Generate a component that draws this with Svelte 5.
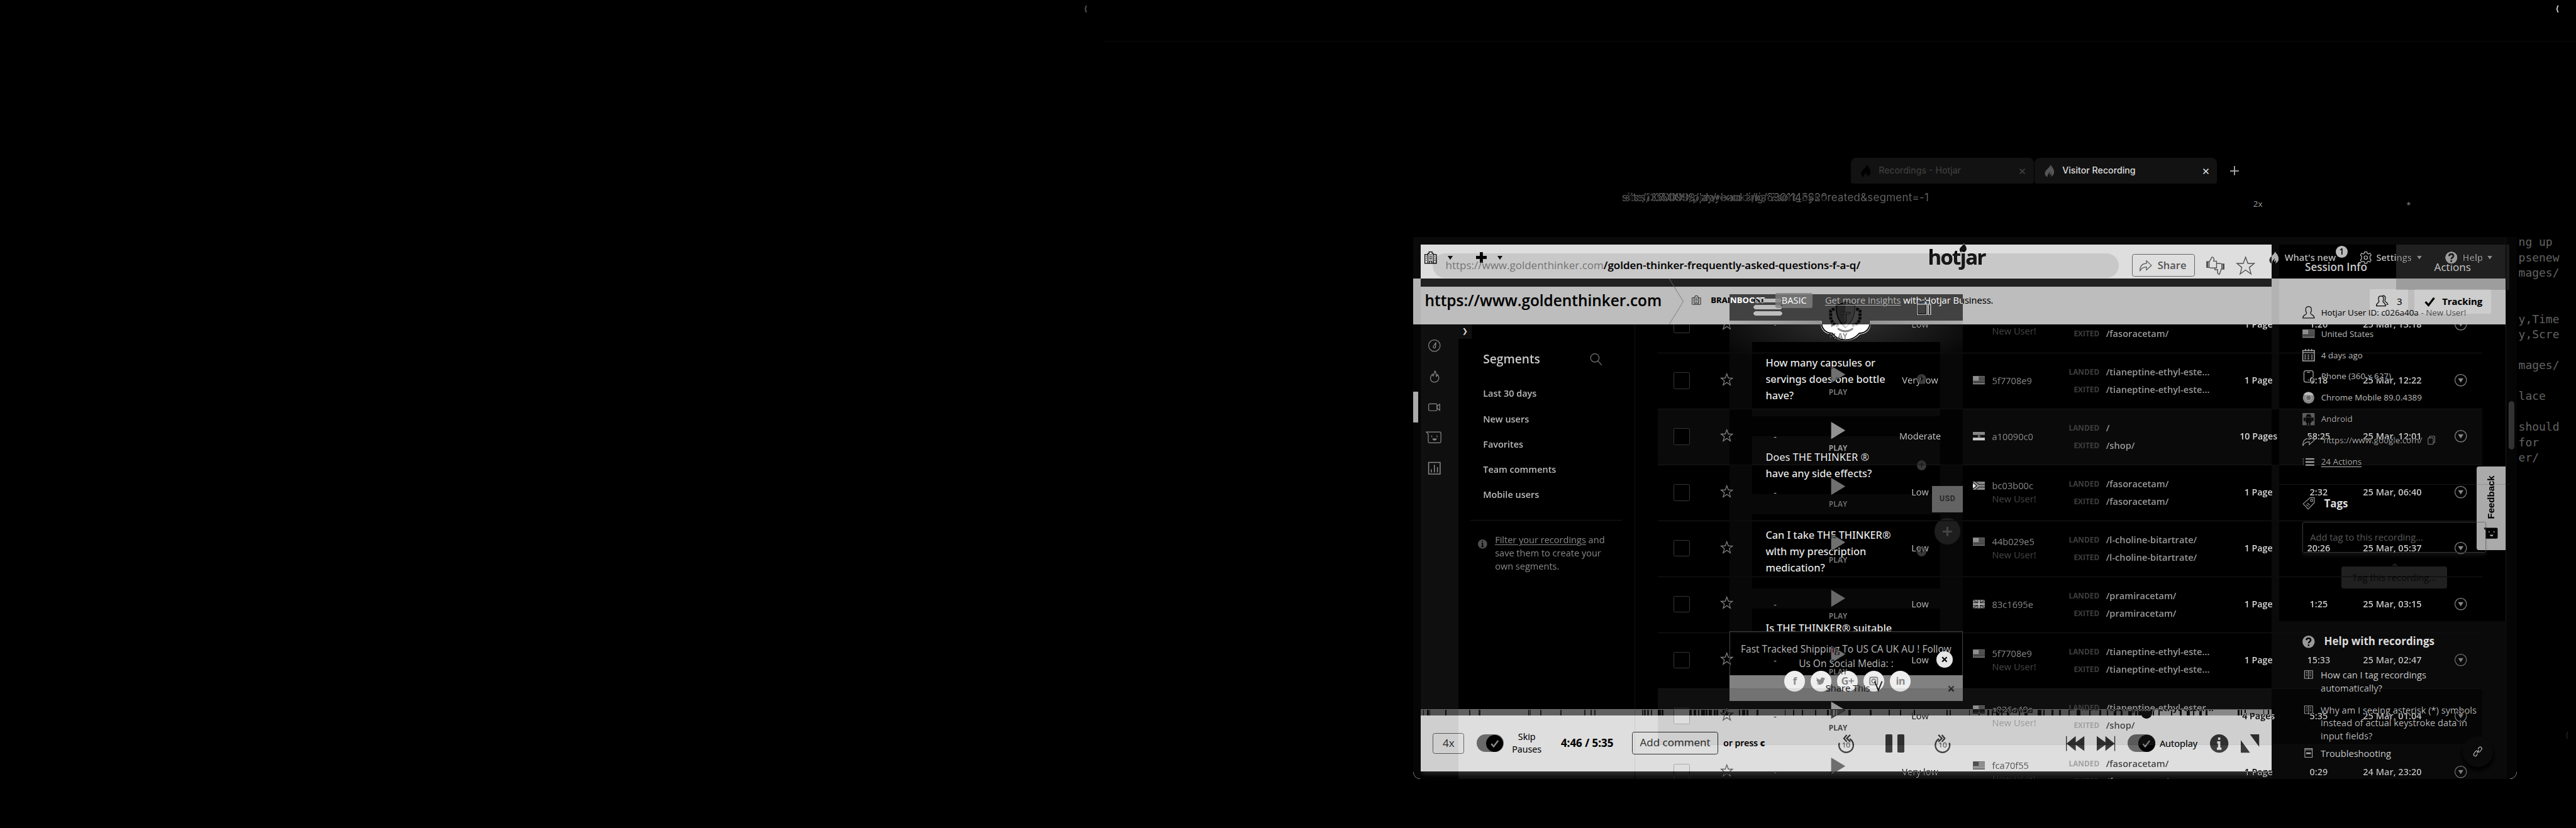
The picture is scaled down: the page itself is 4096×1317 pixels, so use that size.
<script>
  const rows = [
    { level: 'Low', flag: 'us', id: '\u00a0', fresh: true, from: '/fasoracetam/', to: '/fasoracetam/', pages: '1 Page', time: '1:26', date: '25 Mar, 13:18' },
    { level: 'Very low', flag: 'us', id: '5f7708e9', from: '/tianeptine-ethyl-este...', to: '/tianeptine-ethyl-este...', pages: '1 Page', time: '0:18', date: '25 Mar, 12:22' },
    { level: 'Moderate', flag: 'eg', id: 'a10090c0', from: '/', to: '/shop/', pages: '10 Pages', time: '58:25', date: '25 Mar, 12:01', tone: 'seen' },
    { level: 'Low', flag: 'za', id: 'bc03b00c', fresh: true, from: '/fasoracetam/', to: '/fasoracetam/', pages: '1 Page', time: '2:32', date: '25 Mar, 06:40' },
    { level: 'Low', flag: 'us', id: '44b029e5', fresh: true, from: '/l-choline-bitartrate/', to: '/l-choline-bitartrate/', pages: '1 Page', time: '20:26', date: '25 Mar, 05:37' },
    { level: 'Low', flag: 'uk', id: '83c1695e', from: '/pramiracetam/', to: '/pramiracetam/', pages: '1 Page', time: '1:25', date: '25 Mar, 03:15' },
    { level: 'Low', flag: 'us', id: '5f7708e9', fresh: true, from: '/tianeptine-ethyl-este...', to: '/tianeptine-ethyl-este...', pages: '1 Page', time: '15:33', date: '25 Mar, 02:47' },
    { level: 'Low', flag: 'us', id: 'c026a40a', fresh: true, from: '/tianeptine-ethyl-ester...', to: '/shop/', pages: '4 Pages', time: '5:35', date: '25 Mar, 01:04', tone: 'current' },
    { level: 'Very low', flag: 'us', id: 'fca70f55', fresh: true, from: '/fasoracetam/', to: '/fasoracetam/', pages: '1 Page', time: '0:29', date: '24 Mar, 23:20' },
  ];
  const segments = ['Last 30 days', 'New users', 'Favorites', 'Team comments', 'Mobile users'];
  const rail = ['gauge', 'flame', 'video', 'smile', 'chart'];
  const faqs = [
    { size: 'three', lines: ['How many capsules or', 'servings does one bottle', 'have?'] },
    { size: 'two', lines: ['Does THE THINKER ®', 'have any side effects?'] },
    { size: 'three', lines: ['Can I take THE THINKER®', 'with my prescription', 'medication?'] },
    { size: 'three last', lines: ['Is THE THINKER® suitable'] },
  ];
  const info = [
    { icon: 'person', text: 'Hotjar User ID: c026a40a', note: '- New User!' },
    { icon: 'us', text: 'United States' },
    { icon: 'calendar', text: '4 days ago' },
    { icon: 'phone', text: 'Phone (360 x 627)' },
    { icon: 'chrome', text: 'Chrome Mobile 89.0.4389' },
    { icon: 'android', text: 'Android' },
    { icon: 'share', text: 'https://www.google.com/', copy: true },
    { icon: 'list', text: '24 Actions', link: true },
  ];
  const help = [
    { icon: 'book', lines: ['How can I tag recordings', 'automatically?'] },
    { icon: 'book', lines: ['Why am I seeing asterisk (*) symbols', 'instead of actual keystroke data in', 'input fields?'] },
    { icon: 'doc', lines: ['Troubleshooting'] },
  ];
  const code = ['ng up', 'psenew', 'mages/', '', '', 'y,Time', 'y,Scre', '', 'mages/', '', 'lace', '', 'should', 'for', 'er/'];
  const social = ['f', 'tw', 'G+', 'ig', 'in'];
  // Event marks on the timeline: [offset, width]
  const ticks = [[6,3],[17,5],[23,2],[64,4],[126,4],[151,5],[281,3],[286,2],[312,3],[364,3],[426,4],[443,3],[453,4],[578,3],[583,4],[590,6],[600,4],[619,8],[629,4],[700,7],[712,6],[724,3],[732,9],[744,4],[752,8],[765,4],[772,5],[788,4],[795,7],[830,4],[838,8],[850,5],[876,6],[950,2],[972,2],[994,3],[1029,3],[1060,5],[1076,4],[1084,3],[1116,6],[1172,5],[1220,4],[1250,3],[1287,2],[1372,3],[1380,3],[1430,3],[1455,4],[1478,6],[1490,3],[1502,8],[1515,3],[1530,6],[1560,4],[1575,8],[1610,9],[1624,3],[1645,5],[1665,6],[1690,4],[1712,10],[1744,4],[1770,6],[1790,3],[1808,7],[1826,5],[1846,9],[1864,5],[1872,6],[1910,3],[1925,3],[1958,3],[1980,5],[1998,4],[2001,6],[2015,3],[2032,6],[2048,4],[2131,6],[2140,3],[2149,3],[2198,3],[2210,3]];
</script>

{#snippet icon(name, cls = '')}
  <svg class="ico {cls}" viewBox="0 0 32 32" fill="none" stroke="currentColor" stroke-width="2">
    {#if name === 'building'}
      <path d="M9 31V5h3V1h8v4h3v26M9 8H1v23h30V8h-8M13 31v-6h6v6M4 13h2M4 18h2M4 23h2M26 13h2M26 18h2M26 23h2M12 9h8M12 14h8M12 19h8" />
    {:else if name === 'gauge'}
      <circle cx="16" cy="16" r="15" /><path d="M20 8l-6 9a3 3 0 105 2z" />
    {:else if name === 'flame'}
      <path d="M17 1c1 6-3 8-4 14-2-1-2-3-2-5-8 8-7 20 5 21 13-1 14-13 8-20 0 3-1 4-3 5 0-6-1-11-4-15z" />
    {:else if name === 'hotflame'}
      <path fill="currentColor" stroke="none" d="M18 0c1 8-14 12-14 23 0 4 3 8 7 9-1-8 4-8 6-14 2 4-2 6 0 9 2-1 3-3 3-5 2 3 1 7-1 10 14-7 11-20-1-32z" />
    {:else if name === 'video'}
      <rect x="1" y="7" width="22" height="18" rx="3" /><path d="M23 13l7-5v16l-7-5z" />
    {:else if name === 'smile'}
      <path d="M-5 2h35a3 3 0 013 3v22a3 3 0 01-3 3H3a3 3 0 01-3-3V7z" /><path d="M9 11v4M23 11v4" /><path fill="currentColor" d="M12 20h9c-1 4-8 4-9 0z" />
    {:else if name === 'chart'}
      <path d="M1 1h30v30H1zM8 27v-8M16 27V7M24 27V13" stroke-width="2.5" />
    {:else if name === 'search'}
      <circle cx="13" cy="12" r="11" /><path d="M21 20l10 11" />
    {:else if name === 'star'}
      <path d="M16 1l4 11h11l-8.500 7 3 11.500L16 23.500 6.500 30.500l3-11.500L1 12h11z" />
    {:else if name === 'gear'}
      <circle cx="16" cy="16" r="4.500" /><path d="M13 1h6l1 4 3 1.500 4-2 3 5-3 3v7l3 3-3 5-4-2-3 1.500-1 4h-6l-1-4-3-1.500-4 2-3-5 3-3v-7l-3-3 3-5 4 2L12 5z" />
    {:else if name === 'question' || name === 'info'}
      <circle cx="16" cy="16" r="16" fill="currentColor" stroke="none" />
      {#if name === 'question'}
        <path class="cut" stroke-width="4" d="M10.500 12c0-7 11-7 11 0 0 4-5.500 4-5.500 8M16 23v4" />
      {:else}
        <path class="cut" stroke-width="4" d="M16 5.500v4M12.500 14H16v11M12 25h8" />
      {/if}
    {:else if name === 'down'}
      <circle cx="16" cy="16" r="15" /><path fill="currentColor" stroke="none" d="M9 11h14l-7 11z" />
    {:else if name === 'people'}
      <path d="M13 3c8 0 8 8 5 14 1 4 7 4 7 12H1c0-8 6-8 7-12C5 11 5 3 13 3zM17 2c8-1 9 7 6 13 0 4 7 4 8 10h-4" />
    {:else if name === 'check'}
      <path stroke-width="6" d="M3 17l9 10L29 5" />
    {:else if name === 'person'}
      <path d="M16 1c9 0 9 10 5 17 0 5 10 4 10 13H1c0-9 10-8 10-13C7 11 7 1 16 1z" />
    {:else if name === 'calendar'}
      <path d="M1 4h30v27H1zM1 10h30M8 0v6M16 0v6M24 0v6M5 16h5M13 16h5M22 16h5M5 21h5M13 21h5M22 21h5M5 26h5M13 26h5M22 26h5" stroke-width="2.500" />
    {:else if name === 'phone'}
      <rect x="4" y="1" width="24" height="30" rx="5" /><path d="M12 5h8M14 25h4" />
    {:else if name === 'chrome'}
      <circle cx="16" cy="16" r="15" fill="#777" stroke="none" /><path d="M3 8a15 15 0 0126 1H16z" fill="#444" stroke="none" /><circle cx="16" cy="16" r="7" fill="#999" stroke="#555" />
    {:else if name === 'android'}
      <path fill="#999" stroke="none" d="M0 0h32v32H0z" /><path stroke="none" class="blank" d="M9 10a7 7 0 0114 0zM8 11h16v13h-3v7h-4v-6h-2v6h-4v-7H8zM3 12h4v9H3zM25 12h4v9h-4z" />
    {:else if name === 'share'}
      <path d="M1 30C1 17 7 10 18 10V3l13 12-13 12v-8C9 19 4 23 1 30z" />
    {:else if name === 'list'}
      <path stroke-width="4" d="M8 8h23M8 16h23M8 24h23" /><path stroke-width="2" stroke-dasharray="2 2" d="M2 6v20" />
    {:else if name === 'tag'}
      <path d="M2 17L20 1h11v13L15 31z" /><circle cx="24" cy="8" r="3" /><path d="M10 19l6 5M13 15l6 5" />
    {:else if name === 'book'}
      <path d="M4 5h24v23H4zM16 5v25M8 10h5M8 15h5M8 20h5M19 10h5M19 15h5M19 20h5" />
    {:else if name === 'doc'}
      <path d="M5 3h22v26H5zM5 7h22" /><path d="M9 17h14" stroke-width="5" />
    {:else if name === 'copy'}
      <path d="M4 8h18v22H4zM9 8V2h18v22h-5" />
    {:else if name === 'thumbs'}
      <path d="M1 9h4v10H1zM5 10l5-9c3 0 4 3 3 7h5v12H8l-3-1M31 13h-4v9h4zM27 20l-4 11c-3 0-4-3-3-8h-5v-3M18 12h6l3 1" /><path stroke-width="3" d="M2 9v10M30 13v9" />
    {:else if name === 'bag'}
      <path d="M2 9h20v22H2zM25 9h5v22h-5zM9 9V6a6 6 0 0112 0v3" stroke-width="2.500" />
    {:else if name === 'back' || name === 'ahead'}
      <g transform={name === 'ahead' ? 'matrix(-1 0 0 1 32 0)' : ''}>
        <path stroke-width="2.500" d="M4 15a12.500 12.500 0 1018-7M17 1l-5 6 5 6M23 1l-6 6 6 6" />
      </g>
    {:else if name === 'prev' || name === 'next'}
      <g transform={name === 'next' ? 'matrix(-1 0 0 1 32 0)' : ''} fill="currentColor" stroke="none">
        <path d="M0 3h1.500v26H0zM1 16L17 3v26zM14 16L32 3v26z" />
      </g>
    {:else if name === 'expand'}
      <path fill="currentColor" stroke="none" d="M16 0h16v22zM0 10v22h16z" />
    {:else if name === 'link'}
      <path stroke-width="2.500" d="M14 20l6-9M17 9l3-5c3-5 11 0 8 5l-4 6c-2 3-5 3-7 1M16 22l-3 5c-3 5-11 1-8-5l4-6c2-3 5-3 7-1" />
    {:else if name === 'cross'}
      <path stroke-width="7" d="M4 4l24 24M28 4L4 28" />
    {/if}
  </svg>
{/snippet}

{#snippet flag(name)}
  <svg class="flag" viewBox="0 0 32 22">
    {#if name === 'us'}
      <path fill="#888" d="M0 0h32v22H0z" /><path stroke="#ddd" stroke-width="1.700" d="M14 3h17M14 6.500h17M14 10h17M1 13.500h30M1 17h30" /><path fill="#666" d="M1 1h14v11H1z" /><path stroke="#aaa" stroke-width="1" stroke-dasharray="1.500 1.500" d="M2 3.500h12M2 6.500h12M2 9.500h12" />
    {:else if name === 'eg'}
      <path fill="#777" d="M0 0h32v8H0z" /><path fill="#eee" d="M0 8h32v7H0z" /><path fill="#333" d="M0 15h32v7H0z" /><path fill="#999" d="M13 7h6v8h-6z" />
    {:else if name === 'za'}
      <path fill="#777" d="M0 0h32v22H0z" /><path stroke="#ddd" stroke-width="8" fill="none" d="M0-2l15 13h18M0 24l15-13" /><path stroke="#666" stroke-width="4" fill="none" d="M0-2l15 13h18M0 24l15-13" /><path fill="#111" d="M0 5l8 6-8 6z" />
    {:else}
      <path fill="#777" d="M0 0h32v22H0z" /><path stroke="#ccc" stroke-width="2" d="M0 0l32 22M32 0L0 22" /><path stroke="#eee" stroke-width="7" d="M16 0v22M0 11h32" /><path stroke="#444" stroke-width="4" d="M16 0v22M0 11h32" />
    {/if}
  </svg>
{/snippet}

<div class="desktop">
  <div class="topline"></div>
  <span class="mark m1">⟨</span>
  <span class="mark m2">⟨</span>
  <span class="mark m3">2x</span>
  <span class="mark m4">*</span>
  <span class="mark m5">(</span>

  <div class="tabs">
    <div class="tab">{@render icon('hotflame', 'fav')}<span>Recordings - Hotjar</span><b>×</b></div>
    <div class="tab active">{@render icon('hotflame', 'fav')}<span>Visitor Recording</span><b>×</b></div>
    <i class="newtab"></i>
  </div>
  <div class="address">
    <span>sites/1350099/playbacks/list?sort_by=created&amp;segment=-1</span>
    <span class="ghost">site/1350099/play/recording/5901145320</span>
  </div>

  <pre class="code">{#each code as line}<span>{line}</span>{/each}</pre>

  <div class="screen">
    <!-- Recordings list -->
    <section class="dash">
      <header class="top">
        {@render icon('building', 'brand')}
        <i class="caret c1"></i><i class="plus"></i><i class="caret c2"></i>
        <div class="logo">hotjar{@render icon('hotflame', 'logoflame')}</div>
        <div class="nav">
          {@render icon('hotflame')}
          <span class="whats">What's new<em>1</em></span>
          {@render icon('gear')}<span class="settings">Settings</span><i class="caret"></i>
          {@render icon('question', 'q')}<span class="helptext">Help</span><i class="caret"></i>
        </div>
      </header>
      <div class="sub">
        <div class="site">https://www.goldenthinker.com</div>
        <svg class="chev" viewBox="0 0 38 120"><path d="M0 0l37 60L0 120" fill="none" stroke="#717171" stroke-width="2" /></svg>
        {@render icon('building', 'small')}
        <b class="org">BRAINBOOST</b>
        <span class="plan">BASIC</span>
        <span class="more"><u>Get more insights</u> with Hotjar Business.</span>
        <div class="btn users">{@render icon('people')}<span>3</span></div>
        <div class="btn track">{@render icon('check', 'tick')}<b>Tracking</b></div>
      </div>
      <div class="main">
        <nav class="rail">{#each rail as r}<div>{@render icon(r)}</div>{/each}</nav>
        <i class="marker"></i>
        <aside class="segs">
          <div class="toggletab">❯</div>
          <div class="seghead"><span>Segments</span>{@render icon('search')}</div>
          <ul>{#each segments as s}<li>{s}</li>{/each}</ul>
          <div class="tip">{@render icon('info')}<p><u>Filter your recordings</u> and<br />save them to create your<br />own segments.</p></div>
        </aside>
        <div class="table">
          {#each rows as r}
            <div class="row {r.tone ?? ''}">
              <i class="box"></i>
              {@render icon('star', 'rowstar')}
              <span class="dash1">-</span>
              <div class="play"><svg viewBox="0 0 39 45"><path d="M1 0l37 22.500L1 45z" fill="currentColor" /></svg><b>PLAY</b></div>
              <span class="level">{r.level}</span>
              <div class="user">{@render flag(r.flag)}<div><span>{r.id}</span>{#if r.fresh}<span class="new">New User!</span>{/if}</div></div>
              <dl><dt>LANDED</dt><dd>{r.from}</dd><dt>EXITED</dt><dd>{r.to}</dd></dl>
              <span class="pages">{r.pages}</span>
              <span class="time">{r.time}</span>
              <span class="date">{r.date}</span>
              {@render icon('down', 'dd')}
            </div>
          {/each}
        </div>
      </div>
      <div class="feedback"><span>Feedback</span><svg viewBox="-5 0 40 32"><path fill="#fff" d="M-5 1h36a3 3 0 013 3v24a3 3 0 01-3 3H3a3 3 0 01-3-3V8z" /><path stroke="#555" stroke-width="2.500" d="M10 10v4M24 10v4" /><path fill="#555" d="M12 20h10c-1 6-9 6-10 0z" /></svg></div>
      <div class="linkbtn">{@render icon('link')}</div>
      <i class="edge"></i>
      <i class="thumb"></i>
    </section>

    <!-- Session player, inverted over the list -->
    <section class="rec">
      <div class="player">
        <div class="urlbar">
          <div class="pill"><span>https://www.goldenthinker.com</span><b>/golden-thinker-frequently-asked-questions-f-a-q/</b></div>
          <div class="sharebtn">{@render icon('share')}<span>Share</span></div>
          {@render icon('thumbs', 'big')}
          {@render icon('star', 'big bigstar')}
        </div>
        <div class="view">
          <div class="phone">
            <div class="phead">
              <div class="burger"><i></i><i></i><i></i></div>
              <svg class="crest" viewBox="0 0 134 110">
                <path d="M30 6Q0 30 2 66q2 22 28 26 12 16 36 16t38-16q26-4 28-26 2-36-28-60z" fill="#000" />
                <path d="M3 55q0 32 29 34 12 17 34 17t36-17q29-2 29-34" fill="none" stroke="#fff" stroke-width="3" />
                <path d="M66 8l24 8q2 36-24 58-26-22-24-58z" fill="#1c1c1c" stroke="#444" stroke-width="2.500" />
                <path d="M66 8l24 8q2 36-24 58z" fill="#0a0a0a" />
                <path d="M54 36h24M66 36v24" stroke="#777" stroke-width="4" />
                <path d="M38 26q-14 0-10 14-2 14 8 24 6 6 12 2M94 26q14 0 10 14 2 14-8 24-6 6-12 2" fill="none" stroke="#3a3a3a" stroke-width="8" stroke-dasharray="7 2" />
                <path d="M46 74q20 14 40 0v5q-20 14-40 0z" fill="#777" />
              </svg>
              {@render icon('bag', 'bag')}
            </div>
            <div class="faqs">
              {#each faqs as f}
                <div class="faq {f.size}"><p>{#each f.lines as l}<span>{l}</span>{/each}</p><i class="dot"></i></div>
              {/each}
            </div>
            <div class="promo">
              <div class="ptext"><p>Fast Tracked Shipping To US CA UK AU ! Follow</p><p>Us On Social Media: :</p></div>
              <div class="sharebar"><span>Share This</span><svg viewBox="0 0 20 26"><path d="M1 1l9 22L19 1" fill="none" stroke="#ddd" stroke-width="3" /></svg></div>
              <div class="social">
                {#each social as s}
                  <div>
                    {#if s === 'tw'}<svg viewBox="0 0 24 24"><path fill="#777" d="M1 3c3 4 6 5 10 5 0-6 6-7 9-4l3-1-2 3 2 1-3 2c0 12-12 15-19 10 3 0 5-1 6-2-3 0-4-1-5-3h2C1 13 0 10 1 8l2 1C1 7 0 5 1 3z" /></svg>
                    {:else if s === 'ig'}<svg viewBox="0 0 24 24" fill="none" stroke="#777" stroke-width="3"><rect x="2" y="2" width="20" height="20" rx="4" /><circle cx="12" cy="12" r="5" /></svg>
                    {:else}{s}{/if}
                  </div>
                {/each}
              </div>
              <div class="close">{@render icon('cross')}</div>
              <div class="close2">{@render icon('cross')}</div>
            </div>
            <div class="usd">USD</div>
            <div class="fab"></div>
          </div>
        </div>
        <div class="timeline">{#each ticks as [x, w]}<i style="left:{x}px;width:{w}px"></i>{/each}<b></b></div>
        <div class="controls">
          <div class="speed">4x</div>
          <div class="switch s1"><i>{@render icon('check')}</i></div>
          <div class="skip">Skip<br />Pauses</div>
          <b class="clock">4:46 / 5:35</b>
          <div class="comment">Add comment</div>
          <div class="press">or press <b>c</b></div>
          <div class="jump j1">{@render icon('back')}<span>10</span></div>
          <div class="pause"><i></i><i></i></div>
          <div class="jump j2">{@render icon('ahead')}<span>10</span></div>
          {@render icon('prev', 'big prev')}
          {@render icon('next', 'big next')}
          <div class="switch s2"><i>{@render icon('check')}</i></div>
          <span class="auto">Autoplay</span>
          {@render icon('info', 'big inf')}
          {@render icon('expand', 'big exp')}
        </div>
      </div>
      <div class="side">
        <div class="stabs"><span class="on">Session Info</span><span>Actions</span></div>
        <div class="info">
          {#each info as it}
            <div>
              {#if it.icon === 'us'}{@render flag('us')}{:else}{@render icon(it.icon)}{/if}
              <span class:link={it.link} class:gap={it.copy}>{it.text}</span>
              {#if it.note}<span class="note">{it.note}</span>{/if}
              {#if it.copy}{@render icon('copy', 'copy')}{/if}
            </div>
          {/each}
        </div>
        <div class="tags">
          <h3>{@render icon('tag')}Tags</h3>
          <div class="input">Add tag to this recording...</div>
          <div class="tooltip">Tag this recording...</div>
        </div>
        <div class="helpbox">
          <h3>{@render icon('question')}Help with recordings</h3>
          {#each help as h}
            <div class="hitem">{@render icon(h.icon)}<p>{#each h.lines as l}<span>{l}</span>{/each}</p></div>
          {/each}
        </div>
      </div>
    </section>
  </div>
</div>

<style>
  :global(body) { background: #000; overflow: hidden; }
  .desktop { position: relative; width: 6720px; height: 2160px; zoom: 0.609524; background: #000; overflow: hidden; font: 400 24px/34px 'Open Sans', sans-serif; color: #333; white-space: nowrap; }
  .desktop * { box-sizing: border-box; }
  p, ul, dl, dd, h3, pre { margin: 0; padding: 0; }
  i, em { font-style: normal; display: block; }
  ul { list-style: none; }
  .ico { width: 32px; height: 32px; flex: none; overflow: visible; display: block; }
  .ico .cut { stroke: #fff; }
  .ico .blank { fill: #fff; }
  .flag { width: 32px; height: 22px; flex: none; display: block; }
  u { text-underline-offset: 4px; text-decoration-thickness: 2px; }

  .topline { position: absolute; left: 2880px; right: 0; top: 106px; height: 2px; background: #0b0b0b; }
  .mark { position: absolute; color: #777; font-size: 20px; line-height: 20px; }
  .m1 { left: 2829px; top: 13px; color: #666; font-weight: 700; }
  .m2 { left: 6667px; top: 13px; color: #eee; font-weight: 700; }
  .m3 { left: 5878px; top: 522px; color: #999; font-size: 22px; }
  .m4 { left: 6278px; top: 526px; color: #888; }
  .m5 { left: 6694px; top: 1908px; color: #333; }

  .tabs { position: absolute; left: 4829px; top: 412px; height: 67px; display: flex; align-items: center; gap: 3px; font: 400 23.3px/30px Inter, sans-serif; color: #424242; }
  .tab { width: 476px; height: 67px; background: #121212; border-radius: 14px 14px 6px 6px; display: flex; align-items: center; padding: 0 19px 0 22px; }
  .tab span { margin-left: 18px; flex: 1; }
  .tab b { font: 400 32px/30px Inter, sans-serif; }
  .tab .fav { color: #000; }
  .tab.active { color: #ddd; font-weight: 500; }
  .tab.active .fav { color: #555; }
  .newtab { width: 24px; height: 24px; margin-left: 30px; background: linear-gradient(#aaa, #aaa) center/24px 3px no-repeat, linear-gradient(#aaa, #aaa) center/3px 24px no-repeat; }
  .address { position: absolute; left: 4231px; top: 499px; width: 801px; display: flex; justify-content: flex-end; font: 400 27.7px/36px Inter, sans-serif; letter-spacing: .45px; color: #616161; isolation: isolate; }
  .address .ghost { position: absolute; left: 8px; top: 0; mix-blend-mode: difference; letter-spacing: -.3px; }
  .code { position: absolute; left: 6570px; top: 612px; font: 400 29.5px/40.2px 'DejaVu Sans Mono', monospace; color: #626262; display: grid; grid-auto-rows: 40.2px; }

  .screen { position: absolute; left: 3686px; top: 618px; width: 2880px; height: 1415px; isolation: isolate; overflow: hidden; border-radius: 0 0 20px 20px; }
  .dash, .rec { position: absolute; inset: 0; overflow: hidden; }

  /* Recordings list */
  .dash { background: #fff; display: flex; flex-direction: column; isolation: isolate; }
  .top { height: 108px; flex: none; display: flex; align-items: center; padding-left: 30px; position: relative; }
  .brand { color: #222; }
  .caret { width: 0; height: 0; border: 8px solid transparent; border-top: 10px solid #555; border-bottom: 0; }
  .c1 { margin-left: 28px; border-top-color: #222; }
  .plus { width: 28px; height: 28px; margin-left: 61px; background: linear-gradient(#333, #333) center/28px 8px no-repeat, linear-gradient(#333, #333) center/8px 28px no-repeat; }
  .c2 { margin-left: 29px; border-top-color: #222; }
  .logo { position: relative; margin-left: 1109px; width: 152px; font: 700 54px/60px 'Open Sans'; letter-spacing: -2.7px; color: #1f1f1f; }
  .logoflame { position: absolute; left: 80px; top: -7px; width: 24px; height: 24px; color: #333; }
  .nav { position: absolute; left: 2230px; top: 0; height: 108px; display: flex; align-items: center; font-weight: 600; font-size: 24px; color: #444; }
  .nav > .ico { color: #444; }
  .whats { margin-left: 12px; width: 195px; position: relative; }
  .whats em { position: absolute; left: 133px; top: -13px; width: 31px; height: 31px; border-radius: 50%; background: #444; color: #fff; text-align: center; line-height: 31px; font-size: 22px; }
  .settings { margin: 0 12px; width: 94px; }
  .nav .q { margin-left: 61px; }
  .helptext { margin: 0 11px 0 13px; width: 54px; }
  .sub { height: 120px; flex: none; background: #424242; color: #fff; display: flex; align-items: center; padding-left: 31px; position: relative; z-index: 1; }
  .site { font: 600 40px/60px 'Open Sans'; width: 638px; margin-top: -3px; }
  .chev { width: 38px; height: 120px; }
  .small { width: 24px; height: 24px; margin-left: 21px; margin-top: -6px; color: #ddd; }
  .org { font-size: 21.500px; margin: -4px 0 0 25px; width: 169px; }
  .plan { width: 97px; height: 40px; border-radius: 4px; background: #737373; text-align: center; line-height: 39px; margin-top: -4px; }
  .more { margin: -4px 0 0 32px; width: 440px; }
  .more u { color: #b4b4b4; }
  .btn { position: absolute; top: 28px; height: 64px; background: #323232; border-radius: 4px; display: flex; align-items: center; }
  .users { left: 2496px; width: 100px; padding-left: 16px; gap: 23px; }
  .track { left: 2612px; width: 201px; padding-left: 26px; gap: 19px; font-size: 24.400px; }
  .tick { width: 28px; height: 28px; }
  .main { flex: 1; min-height: 0; display: flex; position: relative; }
  .rail { width: 118px; background: #f0f0f0; padding-top: 16px; display: flex; flex-direction: column; color: #777; }
  .rail div { height: 80px; display: grid; place-items: center; padding-right: 6px; }
  .marker { position: absolute; left: 0; top: 176px; width: 14px; height: 80px; background: #4b4b4b; }
  .segs { width: 461px; position: relative; border-right: 2px solid #eee; padding-left: 65px; }
  .toggletab { position: absolute; left: 0; top: 0; width: 35px; height: 39px; background: #f0f0f0; color: #222; font: 18px/36px 'DejaVu Sans'; text-align: center; }
  .seghead { display: flex; align-items: center; height: 60px; margin-top: 62px; font: 600 31.500px/44px 'Open Sans'; color: #333; }
  .seghead span { width: 278px; }
  .seghead .ico { color: #888; }
  .segs ul { margin-top: 27px; font-weight: 600; font-size: 23.700px; color: #444; }
  .segs li { height: 66px; line-height: 66px; }
  .tip { display: flex; gap: 20px; margin: 32px 0 0 -33px; width: 396px; border-top: 3px solid #e8e8e8; padding: 33px 0 0 20px; color: #777; font-size: 23.900px; line-height: 34.300px; }
  .tip .ico { width: 24px; height: 24px; margin-top: 16px; color: #b0b0b0; }
  .table { margin: -72px 0 0 59px; width: 2152px; }
  .row { height: 146px; border-top: 3px solid #e8e8e8; padding-bottom: 2px; display: flex; align-items: center; }
  .row > * { flex: none; }
  .row.seen { background: #f5f5f5; }
  .row.current { background: #f0f0f0; }
  .box { width: 43px; height: 44px; border: 2px solid #cacaca; border-radius: 4px; background: #fff; margin-left: 41px; }
  .rowstar { color: #777; margin: -6px 0 0 81px; }
  .dash1 { color: #444; width: 20px; margin-left: 106px; }
  .play { color: #8f8f8f; display: flex; flex-direction: column; align-items: center; gap: 10px; margin: 6px 0 0 117px; width: 62px; }
  .play svg { width: 39px; height: 45px; }
  .play b { font-size: 19.500px; line-height: 28px; }
  .seen .play, .current .play { color: #666; }
  .level { text-align: center; color: #333; font-size: 23.800px; width: 130px; margin-left: 118px; }
  .user { display: flex; gap: 19px; width: 250px; margin-left: 72px; color: #777; }
  .user .flag { margin-top: 6px; }
  .user span { display: block; }
  .user .new { color: #bbb; }
  dl { display: grid; grid-template-columns: 81px 320px; gap: 0 17px; line-height: 46px; color: #666; font-weight: 600; }
  dt { text-align: right; font-size: 19.500px; font-weight: 700; color: #c2c2c2; }
  .pages { width: 110px; text-align: center; margin-left: 23px; font-weight: 600; font-size: 23.400px; color: #222; }
  .time { width: 90px; text-align: center; margin-left: 57px; font-weight: 600; font-size: 23.600px; }
  .date { width: 170px; text-align: center; margin-left: 62px; font-weight: 600; font-size: 23.800px; }
  .dd { color: #777; margin-left: 77px; }
  .feedback { position: absolute; left: 2774px; top: 599px; width: 76px; height: 219px; background: #555; border-radius: 6px 0 0 6px; z-index: 2; display: flex; flex-direction: column; align-items: center; padding-top: 23px; gap: 22px; }
  .feedback span { writing-mode: vertical-rl; transform: rotate(180deg); font: 700 24.600px/30px 'Liberation Sans', sans-serif; color: #fff; height: 114px; }
  .feedback svg { width: 38px; height: 30px; }
  .linkbtn { position: absolute; left: 2738px; top: 1304px; width: 80px; height: 80px; border-radius: 50%; background: #fff; box-shadow: 0 8px 16px rgba(0, 0, 0, .06); display: grid; place-items: center; color: #444; z-index: 2; }
  .linkbtn .ico { width: 28px; height: 28px; }
  .edge { position: absolute; left: 2850px; right: 0; top: 0; bottom: 0; background: #fafafa; border-left: 2px solid #e4e4e4; z-index: 3; }
  .thumb { position: absolute; left: 2858px; top: 429px; width: 16px; height: 126px; border-radius: 8px; background: #c4c4c4; z-index: 4; }

  /* Session player */
  .rec { background: #f5f5f5; mix-blend-mode: difference; display: flex; gap: 20px; padding: 20px; }
  .player { width: 2220px; flex: none; display: flex; flex-direction: column; background: #fff; box-shadow: 0 6px 16px rgba(0, 0, 0, .2); clip-path: inset(0 0 -20px 0); }
  .urlbar { height: 110px; flex: none; background: #212121; color: #aaa; display: flex; align-items: center; padding-left: 32px; }
  .pill { width: 1790px; height: 64px; border-radius: 32px; background: #373737; padding-left: 33px; line-height: 62px; font-size: 27.900px; color: #8c8c8c; }
  .pill b { font-weight: 600; font-size: 27.900px; color: #fff; }
  .sharebtn { width: 164px; height: 59px; margin-left: 33px; border: 2px solid #999; border-radius: 6px; display: flex; align-items: center; padding-left: 18px; gap: 16px; font: 600 27px/40px 'Open Sans'; }
  .big { width: 48px; height: 48px; }
  .sharebtn + .big { margin-left: 30px; }
  .bigstar { margin-left: 31px; }
  .urlbar > .big { stroke-width: 1.500; color: #b0b0b0; }
  .view { flex: 1; display: grid; place-items: center; min-height: 0; }
  .phone { width: 610px; height: 1061px; position: relative; overflow: hidden; background: radial-gradient(ellipse 60% 130px at 50% 72px, #cfcfcf, #f7f7f7); display: flex; flex-direction: column; }
  .phead { height: 69px; flex: none; background: #000; color: #fff; display: flex; align-items: flex-start; padding: 9px 0 0 63px; position: relative; z-index: 1; }
  .burger { display: grid; gap: 6px; width: 75px; padding-top: 1px; }
  .burger i { height: 11px; border-radius: 6px; background: #fff; }
  .crest { width: 134px; height: 110px; margin: 4px 0 0 99px; flex: none; }
  .phead .bag { width: 40px; height: 50px; margin-left: 117px; }
  .faqs { padding: 55px 60px 0; display: flex; flex-direction: column; gap: 52px; }
  .faq { background: #fff; height: 194px; flex: none; display: flex; align-items: center; padding: 0 35px; justify-content: space-between; font: 500 27px/42.500px 'Noto Sans', 'Open Sans', sans-serif; color: #111; }
  .faq.two { height: 151px; }
  .faq span { display: block; letter-spacing: -.2px; }
  .last { align-items: flex-start; padding-top: 30px; }
  .last .dot { visibility: hidden; }
  .dot { width: 26px; height: 26px; border-radius: 50%; background: linear-gradient(#fff, #fff) center/12px 2px no-repeat, linear-gradient(#fff, #fff) center/2px 12px no-repeat, #c7c7c7; }
  .promo { position: absolute; inset: 879px 0 0 0; background: #fff; border: 2px solid #bbb; border-bottom: 0; display: flex; flex-direction: column; }
  .ptext { height: 113px; padding-top: 26px; text-align: center; font-size: 25.400px; line-height: 37px; color: #444; }
  .sharebar { flex: 1; margin: 0 -2px; background: #7e7e7e; color: #ddd; display: flex; gap: 11px; justify-content: center; padding: 16px 0 0 42px; font-size: 24px; }
  .sharebar svg { width: 22px; height: 28px; margin-top: -2px; }
  .sharebar span, .sharebar svg { position: relative; z-index: 3; }
  .social { position: absolute; left: 142px; top: 101px; display: flex; gap: 15px; font: 700 27px/54px 'Open Sans'; color: #777; z-index: 2; }
  .social div { width: 54px; height: 54px; border-radius: 50%; background: #111; display: grid; place-items: center; letter-spacing: -1px; }
  .social svg { width: 24px; height: 24px; }
  .close { position: absolute; left: 539px; top: 51px; width: 42px; height: 42px; border-radius: 50%; background: #1a1a1a; color: #fff; display: grid; place-items: center; z-index: 4; }
  .close .ico { width: 16px; height: 16px; }
  .close2 { position: absolute; left: 568px; top: 139px; z-index: 4; }
  .close2 .ico { width: 18px; height: 18px; color: #c8c8c8; }
  .usd { position: absolute; right: 0; top: 500px; width: 81px; height: 68px; background: #9c9c9c; color: #dfdfdf; font: 500 20px/66px Roboto, sans-serif; letter-spacing: 1px; text-align: center; }
  .fab { position: absolute; right: 7px; top: 584px; width: 68px; height: 68px; border-radius: 50%; background: linear-gradient(#bbb, #bbb) center/24px 5px no-repeat, linear-gradient(#bbb, #bbb) center/5px 24px no-repeat, #e1e1e1; }
  .timeline { height: 17px; flex: none; position: relative; background: linear-gradient(90deg, #9f9f9f 1893px, #686868 0); border-top: 1px solid #888; }
  .timeline i { position: absolute; top: 0; height: 16px; background: #e4e4e4; }
  .timeline b { position: absolute; left: 1878px; top: 2px; width: 30px; height: 22px; border-radius: 4px 4px 15px 15px; background: #fff; }
  .controls { height: 146px; flex: none; background: #212121; color: #fff; display: flex; align-items: center; padding-left: 32px; }
  .controls > * { flex: none; }
  .speed { width: 82px; height: 53px; border: 2px solid #999; border-radius: 6px; text-align: center; line-height: 48px; font-size: 28px; color: #c4c4c4; }
  .switch { width: 70px; height: 46px; border-radius: 23px; background: #959595; display: flex; justify-content: flex-end; padding: 1px; }
  .switch i { width: 44px; height: 44px; border-radius: 50%; background: #fff; display: grid; place-items: center; color: #777; }
  .switch .ico { width: 22px; height: 22px; }
  .s1 { margin-left: 32px; }
  .skip { margin-left: 21px; width: 80px; text-align: center; font-size: 23.500px; line-height: 34px; }
  .clock { margin-left: 49px; width: 138px; font-size: 27.800px; }
  .comment { margin-left: 47px; width: 226px; height: 59px; border: 2px solid #ccc; border-radius: 6px; text-align: center; font-size: 28px; line-height: 54px; color: #ccc; }
  .press { margin-left: 13px; width: 112px; font-weight: 600; font-size: 23px; }
  .jump { position: relative; width: 48px; height: 48px; color: #bbb; }
  .jump .ico { width: 48px; height: 48px; }
  .jump span { position: absolute; left: 0; right: 0; top: 13px; text-align: center; font-size: 19px; line-height: 30px; }
  .j1 { margin-left: 184px; }
  .pause { margin-left: 78px; width: 50px; display: flex; justify-content: space-between; }
  .pause i { width: 18px; height: 48px; border-radius: 3px; background: #c0c0c0; }
  .j2 { margin-left: 76px; }
  .prev { margin-left: 298px; color: #c4c4c4; }
  .next { margin-left: 32px; color: #c4c4c4; }
  .s2 { margin-left: 32px; width: 73px; }
  .auto { margin-left: 11px; width: 101px; }
  .inf { margin-left: 30px; color: #c0c0c0; }
  .inf .cut { stroke: #212121; }
  .exp { margin-left: 33px; color: #c4c4c4; }

  .side { width: 600px; flex: none; background: #fff; display: flex; flex-direction: column; }
  .stabs { display: flex; height: 119px; font-size: 28px; text-align: center; line-height: 119px; color: #333; }
  .stabs span { width: 296px; background: #dfdfdf; }
  .stabs .on { width: 304px; background: #fff; font-weight: 600; padding-right: 8px; }
  .info { padding: 31px 0 0 61px; font-size: 22px; color: #444; }
  .info > div { height: 55.600px; display: flex; align-items: center; gap: 16px; }
  .info .note { color: #888; margin-left: -10px; }
  .info .link { text-decoration: underline; text-decoration-thickness: 2px; text-underline-offset: 5px; }
  .info .gap { margin-left: 6px; }
  .info .copy { width: 24px; height: 24px; margin-left: -4px; }
  .info .ico { color: #555; }
  .tags { border-top: 3px solid #e8e8e8; margin-top: 31px; padding: 29px 0 0 61px; }
  h3 { display: flex; align-items: center; gap: 24px; font: 700 27.800px/40px 'Open Sans'; color: #222; }
  h3 .ico { color: #666; }
  .input { width: 478px; height: 80px; margin-top: 28px; border: 3px solid #c8c8c8; border-radius: 4px; box-shadow: 0 6px 10px rgba(0, 0, 0, .08); padding-left: 18px; line-height: 76px; color: #aaa; }
  .tooltip { position: relative; width: 276px; height: 58px; margin: 36px 0 0 101px; background: #dfdfdf; border-radius: 6px; text-align: center; line-height: 58px; color: #f8f8f8; }
  .tooltip::before { content: ''; position: absolute; left: 132px; top: -8px; border: 9px solid transparent; border-bottom: 8px solid #dfdfdf; border-top: 0; }
  .helpbox { margin-top: 85px; flex: 1; background: #f5f5f5; padding: 33px 0 0 61px; color: #333; }
  .hitem { display: flex; gap: 15px; }
  .hitem span { display: block; }
  .hitem .ico { width: 32px; height: 28px; margin-top: 2px; color: #555; }
  .helpbox h3 { margin-bottom: 50px; }
  .hitem + .hitem { margin-top: 23px; }
  .hitem:last-child { margin-top: 12px; }
</style>
